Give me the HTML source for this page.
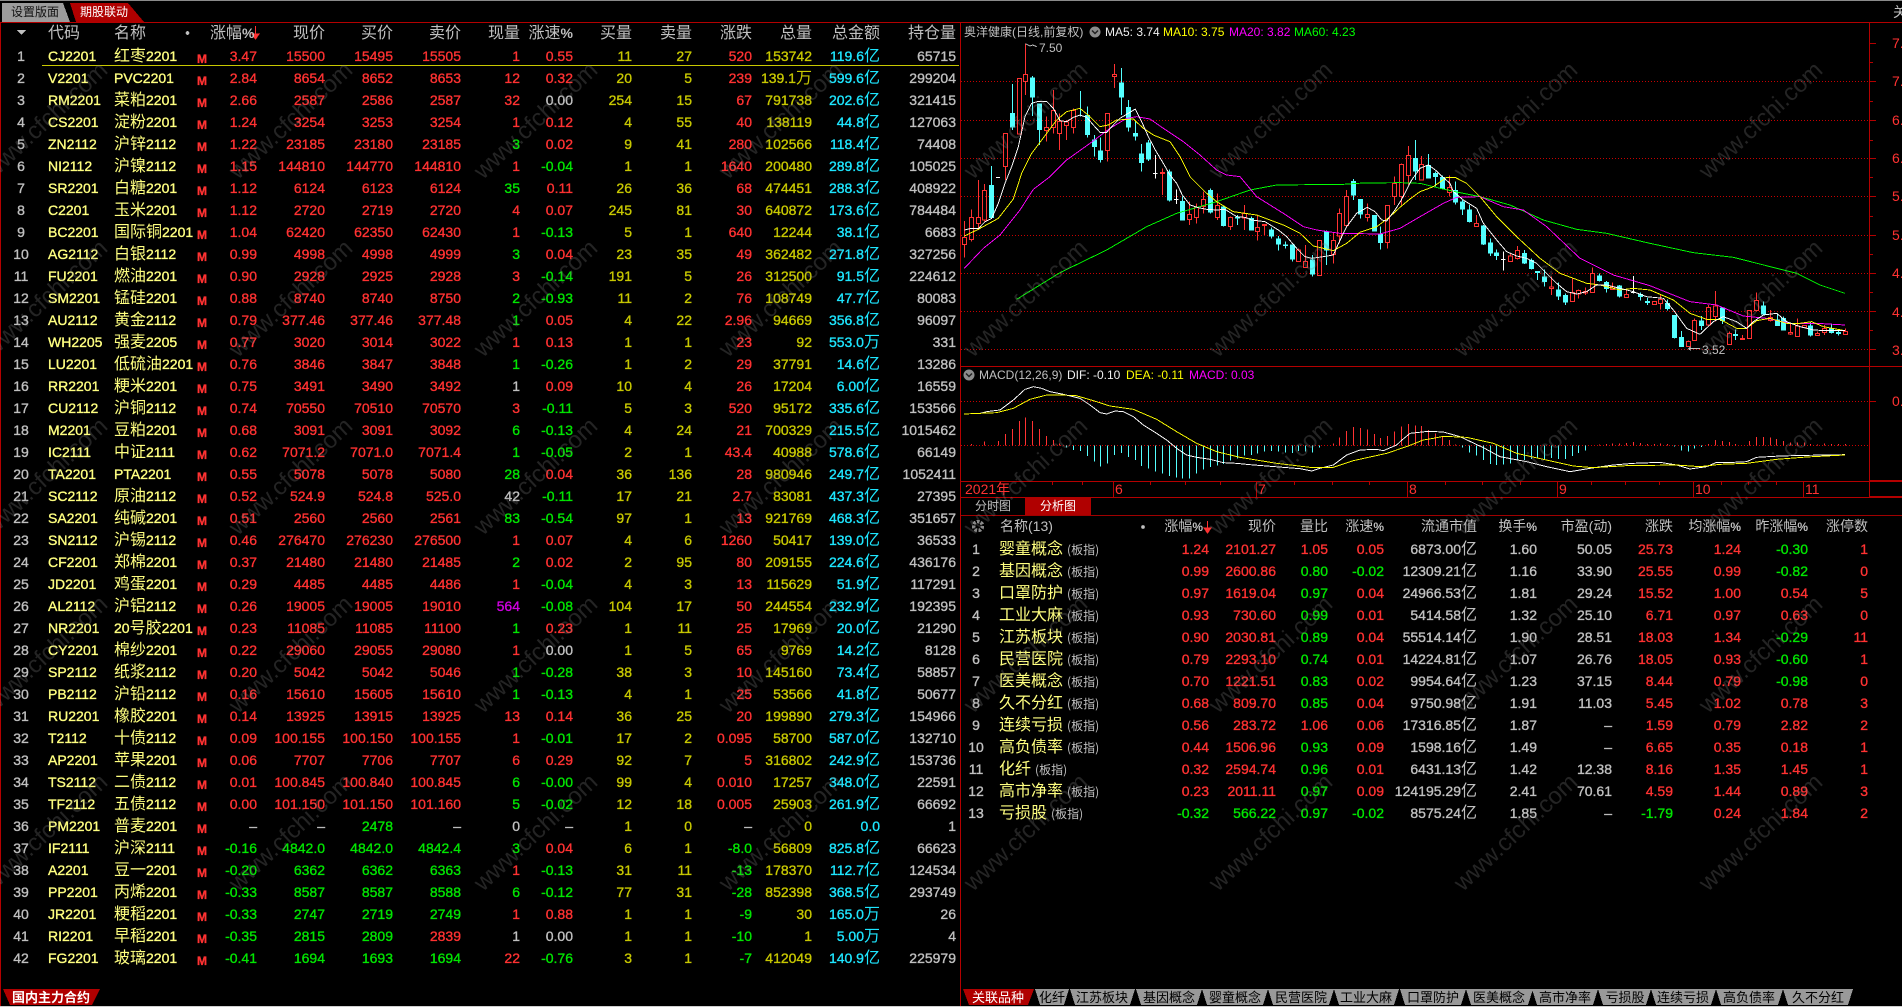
<!DOCTYPE html>
<html lang="zh"><head><meta charset="utf-8"><title>期股联动</title>
<style>
html,body{margin:0;padding:0;background:#000;width:1902px;height:1007px;overflow:hidden}
#p{position:relative;width:1902px;height:1007px;overflow:hidden;font-family:"Liberation Sans","WenQuanYi Zen Hei","Noto Sans CJK SC",sans-serif;font-size:14px;font-weight:normal;color:#c0c0c0}
svg{position:absolute;left:0;top:0;overflow:visible}
table{position:absolute;border-collapse:collapse;table-layout:fixed}
td,th{padding:0;white-space:nowrap;overflow:visible;line-height:22px;height:22px;text-align:right;font-weight:normal}
td{-webkit-text-stroke:.35px currentColor}
th{font-weight:normal;font-size:16px;color:#c0c0c0}
th b{font-size:14px;line-height:14px}
i{font-style:normal;font-weight:normal;font-size:16px;line-height:14px;font-family:"WenQuanYi Zen Hei","Noto Sans CJK SC",sans-serif;-webkit-text-stroke:0}
#L{left:0;top:23px;width:956px}
#R{left:961px;top:515px;width:907px}
#R th{font-size:14px;height:23px;line-height:23px}
#R th b{font-size:12px;line-height:12px}
#L td:nth-child(1),#R td:nth-child(1){text-align:center;color:#c0c0c0}
#L td:nth-child(2){text-align:left;padding-left:6px;color:#ffff80}
#L td:nth-child(3){text-align:left;color:#ffff80}
#L td:nth-child(4){text-align:left;padding-left:0;color:#ff3232;font-size:12px;font-weight:bold;position:relative;top:3px}
#L td{color:#ff3232}
#L td:nth-child(11),#L td:nth-child(12),#L td:nth-child(14){color:#c8c800}
#L td:nth-child(15){color:#1ee6ff}
#L td:nth-child(16){color:#c0c0c0}
#R td{color:#ff3232}
#R td:nth-child(2){text-align:left;padding-left:8px;color:#ffff80}
#R td:nth-child(2) u{text-decoration:none;font-size:12px;line-height:12px;font-weight:normal;color:#c0c0c0;margin-left:4px;-webkit-text-stroke:0;font-family:"WenQuanYi Zen Hei","Noto Sans CJK SC",sans-serif}
#R td:nth-child(7),#R td:nth-child(8),#R td:nth-child(9){color:#c0c0c0}
#L td.g,#R td.g{color:#00e600}
#L td.w,#R td.w{color:#c0c0c0}
#L td.m{color:#d000e0}
.t{position:absolute;white-space:nowrap;line-height:16px;font-weight:normal;font-size:12px}
</style></head><body><div id="p">

<svg width="1902" height="1007" shape-rendering="crispEdges">
<rect x="0" y="0" width="1902" height="1" fill="#8a8a8a"/>
<polygon points="2,3 63,3 70,22 2,22" fill="#9c9c9c"/>
<polygon points="70,3 128,3 144,22 76,22" fill="#b00000"/>
<rect x="0" y="22" width="1902" height="1" fill="#b40000"/>
<rect x="0" y="22" width="1" height="985" fill="#b40000"/>
<rect x="960" y="22" width="1" height="985" fill="#b40000"/>
<rect x="1869" y="22" width="1" height="475" fill="#b40000"/>
<rect x="961" y="366" width="941" height="1" fill="#b40000"/>
<rect x="961" y="481" width="908" height="1" fill="#b40000"/>
<rect x="1869" y="480" width="33" height="2" fill="#b40000"/>
<rect x="961" y="497" width="908" height="1" fill="#b40000"/>
<rect x="1869" y="496" width="33" height="2" fill="#b40000"/>
<rect x="961" y="515" width="941" height="1" fill="#a00000"/>
<rect x="1025" y="497" width="66" height="18" fill="#b00000"/>
<rect x="42" y="65" width="917" height="1" fill="#c8c800"/>
<rect x="0" y="1006" width="1902" height="1" fill="#cfcfcf"/>
<polygon points="17,30 26,30 21.5,35" fill="#c0c0c0"/>
<circle cx="187.500" cy="33" r="1.800" fill="#c0c0c0"/>
<circle cx="1143" cy="527" r="1.800" fill="#c0c0c0"/>
<path d="M255.500 26V37M252 34l3.500 5 3.500-5z" stroke="#ff3232" fill="#ff3232"/>
<path d="M1207.500 521V531M1204 528l3.500 5 3.500-5z" stroke="#ff3232" fill="#ff3232"/>
<circle cx="978" cy="526" r="4.500" fill="none" stroke="#8a8a8a" stroke-width="3.500" stroke-dasharray="2.500 1.500"/>
<g stroke="#c80000" stroke-width="1" stroke-dasharray="1 2" fill="none">
<path d="M961 81.500H1869M961 120.500H1869M961 158.500H1869M961 196.500H1869M961 235.500H1869M961 273.500H1869M961 311.500H1869M961 349.500H1869M961 401.500H1869M961 445.500H1869"/>
</g>
<g stroke="#b40000" stroke-width="1" fill="none">
<path d="M1869 43.500h7M1869 81.500h7M1869 120.500h7M1869 158.500h7M1869 196.500h7M1869 235.500h7M1869 273.500h7M1869 311.500h7M1869 349.500h7M1869 401.500h7M1869 62.500h4M1869 101.500h4M1869 140.500h4M1869 177.500h4M1869 216.500h4M1869 254.500h4M1869 292.500h4M1869 330.500h4"/>
<path d="M1113.500 481V497M1256.500 481V497M1407.500 481V497M1557.500 481V497M1693.500 481V497M1803.500 481V497M1052.500 481v4M1082.500 481v4M1150.500 481v4M1185.500 481v4M1220.500 481v4M1294.500 481v4M1332.500 481v4M1369.500 481v4M1445.500 481v4M1482.500 481v4M1520.500 481v4M1591.500 481v4M1625.500 481v4M1659.500 481v4M1721.500 481v4M1748.500 481v4M1776.500 481v4"/>
</g>

<g transform="translate(950 0) scale(.33333)" stroke-width="3" fill="none">
<path stroke="#ff3232" d="M43 663V712M43 734V773M37 712h13v22h-13zM64 628V652M64 719V725M58 652h13v67h-13zM85 540V652M85 670V690M79 652h13v18h-13zM103 552V571M103 660V665M97 571h13v89h-13zM166 499V540M160 400h13v99h-13zM202 235h13v167h-13zM226 130V223M226 244V285M220 223h13v21h-13zM289 350V383M289 392V425M283 383h13v9h-13zM310 270V331M310 383V400M304 331h13v52h-13zM328 340V365M328 401V450M322 365h13v36h-13zM349 360V366M349 377V420M343 366h13v11h-13zM370 325V331M370 383V400M364 331h13v52h-13zM472 452V485M466 340h13v112h-13zM493 192V223M493 230V264M487 223h13v7h-13zM637 505V517M637 520V585M631 517h13v3h-13zM718 605V644M718 658V675M712 644h13v14h-13zM739 610V623M739 652V670M733 623h13v29h-13zM760 575V598M760 620V640M754 598h13v22h-13zM802 580V617M802 652V660M796 617h13v35h-13zM841 650V652M841 680V690M835 652h13v28h-13zM883 615V640M883 654V690M877 640h13v14h-13zM922 645V682M922 694V722M916 682h13v12h-13zM943 672V705M937 673h13v3h-13zM1039 750h13v35h-13zM1045 745V750M1066 735V785M1060 785h13v17h-13zM1108 720V722M1102 722h13v104h-13zM1150 697V722M1150 763V790M1144 722h13v41h-13zM1168 625V640M1168 708V730M1162 640h13v68h-13zM1189 570V589M1189 677V680M1183 589h13v88h-13zM1252 610V643M1252 652V665M1246 643h13v9h-13zM1312 727V745M1306 616h13v111h-13zM1333 530V551M1333 589V615M1327 551h13v38h-13zM1354 490V493M1354 590V615M1348 493h13v97h-13zM1375 438V466M1375 526V555M1369 466h13v60h-13zM1414 468V493M1408 493h13v47h-13zM1498 527V562M1498 577V590M1492 562h13v15h-13zM1579 645V670M1573 670h13v10h-13zM1681 760V768M1675 768h13v16h-13zM1702 738V752M1702 775V778M1696 752h13v23h-13zM1804 830V861M1804 866V885M1798 861h13v5h-13zM1867 835V877M1861 877h13v28h-13zM1885 868V872M1885 882V895M1879 872h13v10h-13zM1906 863V875M1906 879V885M1900 875h13v4h-13zM1927 802V820M1921 820h13v57h-13zM1987 847V861M1981 861h13v7h-13zM2029 870V883M2023 883h13v9h-13zM2107 905h13v8h-13zM2131 885V899M2131 911V928M2125 899h13v12h-13zM2215 1022V1024M2209 1024h13v16h-13zM2233 955V961M2227 961h13v60h-13zM2275 915V922M2275 975V980M2269 922h13v53h-13zM2296 873V918M2296 950V965M2290 918h13v32h-13zM2338 995V1000M2332 1000h13v33h-13zM2377 1005V1015M2371 1015h13v3h-13zM2392 932h13v84h-13zM2419 877V902M2413 902h13v30h-13zM2461 930V952M2461 961V965M2455 952h13v9h-13zM2521 970V997M2521 1002V1005M2515 997h13v5h-13zM2542 955V978M2536 978h13v32h-13zM2563 975V977M2557 977h13v6h-13zM2602 995V1000M2596 1000h13v6h-13zM2623 975V985M2623 998V1005M2617 985h13v13h-13zM2686 985V995M2680 995h13v8h-13z"/>
<path stroke="#54ffff" fill="#54ffff" d="M124 498V655M118 556h12v96h-12zM187 252V390M181 340h12v41h-12zM247 228V348M241 234h12v57h-12zM268 310V435M262 312h12v77h-12zM391 273V350M412 320V413M406 347h12v57h-12zM433 405V470M427 420h12v20h-12zM451 412V488M445 453h12v25h-12zM514 204V345M508 249h12v42h-12zM535 300V395M529 322h12v59h-12zM556 365V422M550 400h12v8h-12zM574 432V515M568 462h12v26h-12zM595 420V483M589 429h12v48h-12zM658 508V605M652 516h12v84h-12zM697 590V662M691 604h12v56h-12zM781 565V640M775 571h12v65h-12zM820 618V680M814 621h12v55h-12zM862 645V675M856 652h12v2h-12zM904 650V692M898 655h12v35h-12zM964 682V715M958 690h12v18h-12zM985 708V752M979 717h12v15h-12zM1006 725V745M1000 735h12v2h-12zM1027 735V785M1021 735h12v42h-12zM1087 765V830M1081 780h12v42h-12zM1129 692V795M1123 696h12v54h-12zM1210 537V600M1204 545h12v40h-12zM1231 597V655M1225 598h12v44h-12zM1273 645V695M1267 646h12v47h-12zM1291 680V748M1285 703h12v25h-12zM1396 420V540M1390 475h12v38h-12zM1435 462V535M1429 497h12v37h-12zM1456 515V560M1450 520h12v10h-12zM1477 527V568M1471 532h12v33h-12zM1516 545V614M1510 572h12v34h-12zM1537 600V645M1531 606h12v21h-12zM1558 615V667M1552 630h12v34h-12zM1600 675V735M1594 678h12v54h-12zM1621 715V768M1615 729h12v30h-12zM1639 748V780M1633 759h12v8h-12zM1723 750V792M1717 760h12v29h-12zM1744 775V808M1738 782h12v24h-12zM1762 813V840M1756 815h12v2h-12zM1783 808V860M1777 831h12v13h-12zM1825 848V900M1819 870h12v18h-12zM1846 880V915M1840 887h12v19h-12zM1948 820V845M1942 828h12v13h-12zM1969 843V878M1963 847h12v19h-12zM2008 855V892M2002 858h12v30h-12zM2071 878V902M2065 884h12v6h-12zM2092 893V915M2086 905h12v2h-12zM2152 898V932M2146 910h12v16h-12zM2173 945V1016M2167 946h12v66h-12zM2194 993V1040M2188 1012h12v28h-12zM2254 948V990M2248 963h12v14h-12zM2317 922V972M2311 924h12v38h-12zM2356 988V1020M2350 1003h12v4h-12zM2440 905V945M2434 918h12v24h-12zM2482 940V978M2476 960h12v17h-12zM2500 950V990M2494 955h12v35h-12zM2581 965V1010M2575 978h12v27h-12zM2644 970V1000M2638 985h12v13h-12zM2665 990V1006M2659 997h12v4h-12z"/>
<path stroke="#ffffff" d="M138 532H150M616 465V535M609 521H623M679 568V612M672 598H686M1660 755V812M1653 778H1667M2050 828V880M2043 878H2057"/>
<g stroke-width="2.800">
<polyline stroke="#00ff00" points="200,898 330,818 470,750 590,680 680,640 800,605 900,570 980,555 1180,553 1240,549 1350,548 1410,550 1470,565 1530,578 1590,590 1680,615 1780,660 1880,688 1970,700 2100,730 2230,758 2350,772 2540,820 2610,855 2685,880"/>
<polyline stroke="#ff00ff" points="43,805 100,745 150,705 210,630 250,568 300,530 350,480 420,430 480,385 530,355 560,350 600,357 640,385 700,425 750,465 800,510 830,525 870,530 920,590 1000,640 1060,680 1100,690 1170,700 1290,702 1350,685 1410,650 1480,610 1520,592 1590,590 1660,620 1720,630 1790,680 1890,775 1990,825 2100,857 2220,905 2300,915 2380,948 2450,955 2520,970 2600,970 2685,975"/>
<polyline stroke="#ffff00" points="43,708 85,688 145,655 190,597 215,520 245,460 290,400 320,360 350,335 390,325 420,350 450,380 475,375 500,360 550,357 580,385 610,405 660,425 690,470 720,530 770,580 800,605 850,635 920,645 1000,675 1050,700 1090,738 1150,752 1190,730 1230,697 1280,680 1320,650 1350,622 1380,597 1410,575 1450,560 1490,532 1515,532 1550,550 1590,590 1640,650 1700,710 1770,775 1830,820 1910,850 1950,855 2010,870 2050,865 2100,870 2170,900 2220,940 2270,958 2310,958 2360,985 2390,985 2420,962 2460,955 2510,970 2550,970 2585,965 2620,980 2685,992"/>
<polyline stroke="#ffffff" points="43,690 60,686 85,686 105,665 125,655 145,610 165,550 185,500 205,440 225,350 245,310 265,304 290,304 310,325 330,362 350,365 370,352 390,345 410,352 430,375 450,397 470,397 490,375 510,355 535,340 556,327 575,365 595,410 616,450 640,490 660,525 680,550 697,585 720,615 745,623 770,628 800,630 825,628 860,650 885,652 905,660 945,665 985,690 1010,710 1040,745 1065,770 1085,775 1120,770 1150,765 1168,725 1190,680 1220,640 1252,622 1275,635 1295,660 1310,663 1335,630 1354,600 1385,540 1410,505 1435,495 1456,510 1477,530 1500,550 1510,575 1540,600 1580,625 1600,670 1640,720 1670,755 1700,768 1730,775 1760,790 1790,820 1820,850 1850,875 1880,882 1910,875 1940,855 1970,855 2010,865 2050,875 2090,890 2140,895 2170,930 2210,985 2250,1003 2290,965 2320,950 2360,965 2390,985 2410,965 2440,945 2480,940 2510,965 2550,980 2590,990 2630,992 2685,992"/>
</g>
<path stroke="#c0c0c0" d="M226 131l14 7 8-3 12 5M2215 1046H2250M2215 1046l8-5M2215 1046l8 5"/>
</g>

<g transform="translate(950 360) scale(.33333)" stroke-width="3" fill="none">
<path stroke="#ff3232" d="M65 256V252M103 256V245M145 256V243M166 256V222M187 256V207M208 256V183M226 256V172M247 256V183M268 256V207M289 256V228M310 256V240M328 256V250M1150 256V250M1168 256V232M1189 256V213M1210 256V201M1231 256V204M1252 256V209M1273 256V222M1291 256V234M1312 256V228M1333 256V215M1354 256V200M1375 256V192M1396 256V196M1414 256V198M1435 256V210M1456 256V220M1477 256V228M1498 256V240M1516 256V254M1948 256V254M1969 256V252M1987 256V250M2008 256V250M2029 256V249M2050 256V246M2071 256V249M2092 256V252M2113 256V252M2131 256V250M2152 256V252M2275 256V252M2296 256V240M2317 256V243M2338 256V246M2356 256V252M2398 256V243M2419 256V231M2440 256V231M2461 256V232M2479 256V237M2500 256V243M2521 256V247M2542 256V247M2563 256V247M2581 256V252M2602 256V254M2623 256V250M2644 256V252M2665 256V252M2686 256V252"/>
<path stroke="#54ffff" d="M349 256V263M370 256V270M391 256V273M412 256V288M433 256V305M451 256V320M472 256V310M493 256V285M514 256V279M535 256V291M556 256V300M574 256V318M595 256V326M616 256V335M637 256V340M658 256V348M679 256V352M697 256V356M718 256V355M739 256V340M760 256V328M781 256V321M802 256V316M820 256V312M841 256V302M862 256V295M883 256V287M904 256V285M922 256V280M943 256V275M964 256V273M985 256V275M1006 256V277M1027 256V279M1045 256V273M1066 256V275M1087 256V278M1108 256V263M1537 256V263M1558 256V278M1579 256V286M1600 256V300M1621 256V312M1639 256V315M1660 256V313M1681 256V310M1702 256V302M1723 256V300M1744 256V297M1762 256V296M1783 256V297M1804 256V294M1825 256V297M1846 256V297M1867 256V288M1885 256V279M1906 256V272M2173 256V259M2194 256V272M2215 256V275M2233 256V266M2254 256V261"/>
<g stroke-width="2.800">
<polyline stroke="#ffffff" points="42,162 90,160 110,155 150,150 190,120 225,88 250,80 275,85 300,95 340,103 390,115 420,135 450,158 470,162 495,153 520,155 550,170 580,195 620,220 650,240 680,265 710,285 740,292 780,298 820,308 860,310 900,314 950,318 1000,322 1050,326 1085,333 1110,325 1150,315 1190,285 1230,270 1280,268 1300,272 1340,255 1350,245 1380,220 1435,214 1480,216 1530,230 1600,263 1650,290 1730,305 1790,320 1860,335 1920,325 1990,315 2050,310 2130,307 2180,315 2220,327 2270,320 2300,307 2350,307 2390,305 2420,292 2490,288 2570,286 2685,284"/>
<polyline stroke="#ffff00" points="42,162 90,160 140,158 190,145 240,118 290,105 375,106 430,122 480,138 550,148 620,178 680,215 740,250 800,275 870,292 980,310 1080,322 1150,322 1210,302 1310,280 1375,258 1420,240 1450,235 1480,229 1550,232 1630,250 1700,280 1780,298 1870,318 1930,323 2030,317 2180,315 2250,320 2310,313 2390,310 2480,298 2570,291 2685,285"/>
</g>
</g>

<g font-family="&quot;WenQuanYi Zen Hei&quot;,&quot;Noto Sans CJK SC&quot;,sans-serif" font-size="13" font-weight="normal" text-anchor="middle">
<polygon points="3,989 100,989 92,1005 10,1005" fill="#b00000"/>
<polygon points="963,989 1034,989 1028,1005 969,1005" fill="#b00000"/>
<polygon points="1035,989 1069,989 1064,1005 1040,1005" fill="#999"/>
<polygon points="1070,989 1135,989 1130,1005 1075,1005" fill="#999"/>
<polygon points="1136,989 1202,989 1197,1005 1141,1005" fill="#999"/>
<polygon points="1202,989 1268,989 1263,1005 1207,1005" fill="#999"/>
<polygon points="1268,989 1334,989 1329,1005 1273,1005" fill="#999"/>
<polygon points="1334,989 1399,989 1394,1005 1339,1005" fill="#999"/>
<polygon points="1400,989 1466,989 1461,1005 1405,1005" fill="#999"/>
<polygon points="1466,989 1533,989 1528,1005 1471,1005" fill="#999"/>
<polygon points="1532,989 1598,989 1593,1005 1537,1005" fill="#999"/>
<polygon points="1598,989 1651,989 1646,1005 1603,1005" fill="#999"/>
<polygon points="1651,989 1716,989 1711,1005 1656,1005" fill="#999"/>
<polygon points="1716,989 1783,989 1778,1005 1721,1005" fill="#999"/>
<polygon points="1783,989 1853,989 1848,1005 1788,1005" fill="#999"/>
<g shape-rendering="auto">
<text x="51" y="1002" fill="#fff" font-weight="bold">国内主力合约</text>
<text x="998" y="1002" fill="#fff">关联品种</text>
<text x="1052" y="1002" fill="#000">化纤</text>
<text x="1102" y="1002" fill="#000">江苏板块</text>
<text x="1169" y="1002" fill="#000">基因概念</text>
<text x="1235" y="1002" fill="#000">婴童概念</text>
<text x="1301" y="1002" fill="#000">民营医院</text>
<text x="1366" y="1002" fill="#000">工业大麻</text>
<text x="1433" y="1002" fill="#000">口罩防护</text>
<text x="1499" y="1002" fill="#000">医美概念</text>
<text x="1565" y="1002" fill="#000">高市净率</text>
<text x="1625" y="1002" fill="#000">亏损股</text>
<text x="1683" y="1002" fill="#000">连续亏损</text>
<text x="1749" y="1002" fill="#000">高负债率</text>
<text x="1818" y="1002" fill="#000">久不分红</text>
</g>
</g>
<g shape-rendering="auto">
<circle cx="1095" cy="32" r="5.500" fill="#8c8c8c"/><path d="M1092 30.500l3 3 3-3" stroke="#222" stroke-width="1.500" fill="none"/>
<circle cx="969" cy="375" r="5.500" fill="#8c8c8c"/><path d="M966 373.500l3 3 3-3" stroke="#222" stroke-width="1.500" fill="none"/>
</g>
</svg>

<div class="t" style="left:11px;top:4px;color:#111;font-size:12px;letter-spacing:0">设置版面</div>
<div class="t" style="left:80px;top:4px;color:#fff;font-size:12px">期股联动</div>
<div class="t" style="left:1893px;top:4px;color:#c0c0c0;font-size:14px">关联</div>

<div class="t" style="left:964px;top:24px;color:#c0c0c0">奥洋健康(日线,前复权)</div>
<div class="t" style="left:1105px;top:24px;color:#f0f0f0">MA5: 3.74</div>
<div class="t" style="left:1163px;top:24px;color:#ffff00">MA10: 3.75</div>
<div class="t" style="left:1229px;top:24px;color:#ff00ff">MA20: 3.82</div>
<div class="t" style="left:1294px;top:24px;color:#00ff00">MA60: 4.23</div>
<div class="t" style="left:1039px;top:40px;color:#c0c0c0">7.50</div>
<div class="t" style="left:1702px;top:342px;color:#c0c0c0">3.52</div>
<div class="t" style="left:979px;top:367px;color:#c0c0c0">MACD(12,26,9)</div>
<div class="t" style="left:1067px;top:367px;color:#f0f0f0">DIF: -0.10</div>
<div class="t" style="left:1126px;top:367px;color:#ffff00">DEA: -0.11</div>
<div class="t" style="left:1189px;top:367px;color:#ff00ff">MACD: 0.03</div>

<div class="t" style="left:1892px;top:35px;color:#ff3232;font-size:14px">7.50</div>
<div class="t" style="left:1892px;top:73px;color:#ff3232;font-size:14px">7.00</div>
<div class="t" style="left:1892px;top:112px;color:#ff3232;font-size:14px">6.50</div>
<div class="t" style="left:1892px;top:150px;color:#ff3232;font-size:14px">6.00</div>
<div class="t" style="left:1892px;top:188px;color:#ff3232;font-size:14px">5.50</div>
<div class="t" style="left:1892px;top:227px;color:#ff3232;font-size:14px">5.00</div>
<div class="t" style="left:1892px;top:265px;color:#ff3232;font-size:14px">4.50</div>
<div class="t" style="left:1892px;top:304px;color:#ff3232;font-size:14px">4.00</div>
<div class="t" style="left:1892px;top:342px;color:#ff3232;font-size:14px">3.50</div>
<div class="t" style="left:1892px;top:393px;color:#ff3232;font-size:14px">0.15</div>

<div class="t" style="left:965px;top:481px;color:#ff3232;font-size:14px">2021年</div>
<div class="t" style="left:1115px;top:481px;color:#ff3232;font-size:14px">6</div>
<div class="t" style="left:1258px;top:481px;color:#ff3232;font-size:14px">7</div>
<div class="t" style="left:1409px;top:481px;color:#ff3232;font-size:14px">8</div>
<div class="t" style="left:1559px;top:481px;color:#ff3232;font-size:14px">9</div>
<div class="t" style="left:1695px;top:481px;color:#ff3232;font-size:14px">10</div>
<div class="t" style="left:1805px;top:481px;color:#ff3232;font-size:14px">11</div>
<div class="t" style="left:975px;top:498px;color:#c0c0c0;font-size:12px">分时图</div>
<div class="t" style="left:1040px;top:498px;color:#fff;font-size:12px">分析图</div>

<table id="L">
<colgroup><col style="width:42px"><col style="width:72px"><col style="width:83px"><col style="width:13px"><col style="width:47px"><col style="width:68px"><col style="width:68px"><col style="width:68px"><col style="width:59px"><col style="width:53px"><col style="width:59px"><col style="width:60px"><col style="width:60px"><col style="width:60px"><col style="width:68px"><col style="width:76px"></colgroup>
<tr style="height:21px"><th></th><th style="text-align:left;padding-left:6px">代码</th><th style="text-align:left">名称</th><th></th><th style="padding-right:5px">涨幅<b>%</b></th><th>现价</th><th>买价</th><th>卖价</th><th>现量</th><th>涨速<b>%</b></th><th>买量</th><th>卖量</th><th>涨跌</th><th>总量</th><th>总金额</th><th>持仓量</th></tr>
<tr><td>1<td>CJ2201<td><i>红枣</i>2201<td>M<td>3.47<td>15500<td>15495<td>15505<td>1<td>0.55<td>11<td>27<td>520<td>153742<td>119.6<i>亿</i><td>65715</tr>
<tr><td>2<td>V2201<td>PVC2201<td>M<td>2.84<td>8654<td>8652<td>8653<td>12<td>0.32<td>20<td>5<td>239<td>139.1<i>万</i><td>599.6<i>亿</i><td>299204</tr>
<tr><td>3<td>RM2201<td><i>菜粕</i>2201<td>M<td>2.66<td>2587<td>2586<td>2587<td>32<td class=w>0.00<td>254<td>15<td>67<td>791738<td>202.6<i>亿</i><td>321415</tr>
<tr><td>4<td>CS2201<td><i>淀粉</i>2201<td>M<td>1.24<td>3254<td>3253<td>3254<td>1<td>0.12<td>4<td>55<td>40<td>138119<td>44.8<i>亿</i><td>127063</tr>
<tr><td>5<td>ZN2112<td><i>沪锌</i>2112<td>M<td>1.22<td>23185<td>23180<td>23185<td class=g>3<td>0.02<td>9<td>41<td>280<td>102566<td>118.4<i>亿</i><td>74408</tr>
<tr><td>6<td>NI2112<td><i>沪镍</i>2112<td>M<td>1.15<td>144810<td>144770<td>144810<td>1<td class=g>-0.04<td>1<td>1<td>1640<td>200480<td>289.8<i>亿</i><td>105025</tr>
<tr><td>7<td>SR2201<td><i>白糖</i>2201<td>M<td>1.12<td>6124<td>6123<td>6124<td class=g>35<td>0.11<td>26<td>36<td>68<td>474451<td>288.3<i>亿</i><td>408922</tr>
<tr><td>8<td>C2201<td><i>玉米</i>2201<td>M<td>1.12<td>2720<td>2719<td>2720<td>4<td>0.07<td>245<td>81<td>30<td>640872<td>173.6<i>亿</i><td>784484</tr>
<tr><td>9<td>BC2201<td><i>国际铜</i>2201<td>M<td>1.04<td>62420<td>62350<td>62430<td>1<td class=g>-0.13<td>5<td>1<td>640<td>12244<td>38.1<i>亿</i><td>6683</tr>
<tr><td>10<td>AG2112<td><i>白银</i>2112<td>M<td>0.99<td>4998<td>4998<td>4999<td class=g>3<td>0.04<td>23<td>35<td>49<td>362482<td>271.8<i>亿</i><td>327256</tr>
<tr><td>11<td>FU2201<td><i>燃油</i>2201<td>M<td>0.90<td>2928<td>2925<td>2928<td>3<td class=g>-0.14<td>191<td>5<td>26<td>312500<td>91.5<i>亿</i><td>224612</tr>
<tr><td>12<td>SM2201<td><i>锰硅</i>2201<td>M<td>0.88<td>8740<td>8740<td>8750<td class=g>2<td class=g>-0.93<td>11<td>2<td>76<td>108749<td>47.7<i>亿</i><td>80083</tr>
<tr><td>13<td>AU2112<td><i>黄金</i>2112<td>M<td>0.79<td>377.46<td>377.46<td>377.48<td class=g>1<td>0.05<td>4<td>22<td>2.96<td>94669<td>356.8<i>亿</i><td>96097</tr>
<tr><td>14<td>WH2205<td><i>强麦</i>2205<td>M<td>0.77<td>3020<td>3014<td>3022<td>1<td>0.13<td>1<td>1<td>23<td>92<td>553.0<i>万</i><td>331</tr>
<tr><td>15<td>LU2201<td><i>低硫油</i>2201<td>M<td>0.76<td>3846<td>3847<td>3848<td class=g>1<td class=g>-0.26<td>1<td>2<td>29<td>37791<td>14.6<i>亿</i><td>13286</tr>
<tr><td>16<td>RR2201<td><i>粳米</i>2201<td>M<td>0.75<td>3491<td>3490<td>3492<td class=w>1<td>0.09<td>10<td>4<td>26<td>17204<td>6.00<i>亿</i><td>16559</tr>
<tr><td>17<td>CU2112<td><i>沪铜</i>2112<td>M<td>0.74<td>70550<td>70510<td>70570<td>3<td class=g>-0.11<td>5<td>3<td>520<td>95172<td>335.6<i>亿</i><td>153566</tr>
<tr><td>18<td>M2201<td><i>豆粕</i>2201<td>M<td>0.68<td>3091<td>3091<td>3092<td class=g>6<td class=g>-0.13<td>4<td>24<td>21<td>700329<td>215.5<i>亿</i><td>1015462</tr>
<tr><td>19<td>IC2111<td><i>中证</i>2111<td>M<td>0.62<td>7071.2<td>7071.0<td>7071.4<td class=g>1<td class=g>-0.05<td>2<td>1<td>43.4<td>40988<td>578.6<i>亿</i><td>66149</tr>
<tr><td>20<td>TA2201<td>PTA2201<td>M<td>0.55<td>5078<td>5078<td>5080<td class=g>28<td>0.04<td>36<td>136<td>28<td>980946<td>249.7<i>亿</i><td>1052411</tr>
<tr><td>21<td>SC2112<td><i>原油</i>2112<td>M<td>0.52<td>524.9<td>524.8<td>525.0<td class=w>42<td class=g>-0.11<td>17<td>21<td>2.7<td>83081<td>437.3<i>亿</i><td>27395</tr>
<tr><td>22<td>SA2201<td><i>纯碱</i>2201<td>M<td>0.51<td>2560<td>2560<td>2561<td class=g>83<td class=g>-0.54<td>97<td>1<td>13<td>921769<td>468.3<i>亿</i><td>351657</tr>
<tr><td>23<td>SN2112<td><i>沪锡</i>2112<td>M<td>0.46<td>276470<td>276230<td>276500<td>1<td>0.07<td>4<td>6<td>1260<td>50417<td>139.0<i>亿</i><td>36533</tr>
<tr><td>24<td>CF2201<td><i>郑棉</i>2201<td>M<td>0.37<td>21480<td>21480<td>21485<td class=g>2<td>0.02<td>2<td>95<td>80<td>209155<td>224.6<i>亿</i><td>436176</tr>
<tr><td>25<td>JD2201<td><i>鸡蛋</i>2201<td>M<td>0.29<td>4485<td>4485<td>4486<td>1<td class=g>-0.04<td>4<td>3<td>13<td>115629<td>51.9<i>亿</i><td>117291</tr>
<tr><td>26<td>AL2112<td><i>沪铝</i>2112<td>M<td>0.26<td>19005<td>19005<td>19010<td class=m>564<td class=g>-0.08<td>104<td>17<td>50<td>244554<td>232.9<i>亿</i><td>192395</tr>
<tr><td>27<td>NR2201<td>20<i>号胶</i>2201<td>M<td>0.23<td>11085<td>11085<td>11100<td class=g>1<td>0.23<td>1<td>11<td>25<td>17969<td>20.0<i>亿</i><td>21290</tr>
<tr><td>28<td>CY2201<td><i>棉纱</i>2201<td>M<td>0.22<td>29060<td>29055<td>29080<td>1<td class=w>0.00<td>1<td>5<td>65<td>9769<td>14.2<i>亿</i><td>8128</tr>
<tr><td>29<td>SP2112<td><i>纸浆</i>2112<td>M<td>0.20<td>5042<td>5042<td>5046<td class=g>1<td class=g>-0.28<td>38<td>3<td>10<td>145160<td>73.4<i>亿</i><td>58857</tr>
<tr><td>30<td>PB2112<td><i>沪铅</i>2112<td>M<td>0.16<td>15610<td>15605<td>15610<td class=g>1<td class=g>-0.13<td>4<td>1<td>25<td>53566<td>41.8<i>亿</i><td>50677</tr>
<tr><td>31<td>RU2201<td><i>橡胶</i>2201<td>M<td>0.14<td>13925<td>13915<td>13925<td>13<td>0.14<td>36<td>25<td>20<td>199890<td>279.3<i>亿</i><td>154966</tr>
<tr><td>32<td>T2112<td><i>十债</i>2112<td>M<td>0.09<td>100.155<td>100.150<td>100.155<td>1<td class=g>-0.01<td>17<td>2<td>0.095<td>58700<td>587.0<i>亿</i><td>132710</tr>
<tr><td>33<td>AP2201<td><i>苹果</i>2201<td>M<td>0.06<td>7707<td>7706<td>7707<td>6<td>0.29<td>92<td>7<td>5<td>316802<td>242.9<i>亿</i><td>153736</tr>
<tr><td>34<td>TS2112<td><i>二债</i>2112<td>M<td>0.01<td>100.845<td>100.840<td>100.845<td class=g>6<td class=g>-0.00<td>99<td>4<td>0.010<td>17257<td>348.0<i>亿</i><td>22591</tr>
<tr><td>35<td>TF2112<td><i>五债</i>2112<td>M<td>0.00<td>101.150<td>101.150<td>101.160<td class=g>5<td class=g>-0.02<td>12<td>18<td>0.005<td>25903<td>261.9<i>亿</i><td>66692</tr>
<tr><td>36<td>PM2201<td><i>普麦</i>2201<td>M<td class=w>–<td class=w>–<td class=g>2478<td class=w>–<td class=w>0<td class=w>–<td>1<td>0<td class=w>–<td>0<td>0.0<td>1</tr>
<tr><td>37<td>IF2111<td><i>沪深</i>2111<td>M<td class=g>-0.16<td class=g>4842.0<td class=g>4842.0<td class=g>4842.4<td class=g>3<td>0.04<td>6<td>1<td class=g>-8.0<td>56809<td>825.8<i>亿</i><td>66623</tr>
<tr><td>38<td>A2201<td><i>豆一</i>2201<td>M<td class=g>-0.20<td class=g>6362<td class=g>6362<td class=g>6363<td>1<td class=g>-0.13<td>31<td>11<td class=g>-13<td>178370<td>112.7<i>亿</i><td>124534</tr>
<tr><td>39<td>PP2201<td><i>丙烯</i>2201<td>M<td class=g>-0.33<td class=g>8587<td class=g>8587<td class=g>8588<td class=g>6<td class=g>-0.12<td>77<td>31<td class=g>-28<td>852398<td>368.5<i>亿</i><td>293749</tr>
<tr><td>40<td>JR2201<td><i>粳稻</i>2201<td>M<td class=g>-0.33<td class=g>2747<td class=g>2719<td class=g>2749<td>1<td>0.88<td>1<td>1<td class=g>-9<td>30<td>165.0<i>万</i><td>26</tr>
<tr><td>41<td>RI2201<td><i>早稻</i>2201<td>M<td class=g>-0.35<td class=g>2815<td class=g>2809<td>2839<td class=w>1<td class=w>0.00<td>1<td>1<td class=g>-10<td>1<td>5.00<i>万</i><td>4</tr>
<tr><td>42<td>FG2201<td><i>玻璃</i>2201<td>M<td class=g>-0.41<td class=g>1694<td class=g>1693<td class=g>1694<td>22<td class=g>-0.76<td>3<td>1<td class=g>-7<td>412049<td>140.9<i>亿</i><td>225979</tr>
</table>

<table id="R">
<colgroup><col style="width:30px"><col style="width:159px"><col style="width:59px"><col style="width:67px"><col style="width:52px"><col style="width:56px"><col style="width:93px"><col style="width:60px"><col style="width:75px"><col style="width:61px"><col style="width:68px"><col style="width:67px"><col style="width:60px"></colgroup>
<tr><th></th><th style="text-align:left;padding-left:9px">名称(13)</th><th style="padding-right:6px">涨幅<b>%</b></th><th>现价</th><th>量比</th><th>涨速<b>%</b></th><th>流通市值</th><th>换手<b>%</b></th><th>市盈(动)</th><th>涨跌</th><th>均涨幅<b>%</b></th><th>昨涨幅<b>%</b></th><th>涨停数</th></tr>
<tr><td>1<td><i>婴童概念</i><u>(板指)</u><td>1.24<td>2101.27<td>1.05<td>0.05<td class=w>6873.00<i>亿</i><td>1.60<td>50.05<td>25.73<td>1.24<td class=g>-0.30<td>1</tr>
<tr><td>2<td><i>基因概念</i><u>(板指)</u><td>0.99<td>2600.86<td class=g>0.80<td class=g>-0.02<td class=w>12309.21<i>亿</i><td>1.16<td>33.90<td>25.55<td>0.99<td class=g>-0.82<td>0</tr>
<tr><td>3<td><i>口罩防护</i><u>(板指)</u><td>0.97<td>1619.04<td class=g>0.97<td>0.04<td class=w>24966.53<i>亿</i><td>1.81<td>29.24<td>15.52<td>1.00<td>0.54<td>5</tr>
<tr><td>4<td><i>工业大麻</i><u>(板指)</u><td>0.93<td>730.60<td class=g>0.99<td>0.01<td class=w>5414.58<i>亿</i><td>1.32<td>25.10<td>6.71<td>0.97<td>0.63<td>0</tr>
<tr><td>5<td><i>江苏板块</i><u>(板指)</u><td>0.90<td>2030.81<td class=g>0.89<td>0.04<td class=w>55514.14<i>亿</i><td>1.90<td>28.51<td>18.03<td>1.34<td class=g>-0.29<td>11</tr>
<tr><td>6<td><i>民营医院</i><u>(板指)</u><td>0.79<td>2293.10<td class=g>0.74<td>0.01<td class=w>14224.81<i>亿</i><td>1.07<td>26.76<td>18.05<td>0.93<td class=g>-0.60<td>1</tr>
<tr><td>7<td><i>医美概念</i><u>(板指)</u><td>0.70<td>1221.51<td class=g>0.83<td>0.02<td class=w>9954.64<i>亿</i><td>1.23<td>37.15<td>8.44<td>0.79<td class=g>-0.98<td>0</tr>
<tr><td>8<td><i>久不分红</i><u>(板指)</u><td>0.68<td>809.70<td class=g>0.85<td>0.04<td class=w>9750.98<i>亿</i><td>1.91<td>11.03<td>5.45<td>1.02<td>0.78<td>3</tr>
<tr><td>9<td><i>连续亏损</i><u>(板指)</u><td>0.56<td>283.72<td>1.06<td>0.06<td class=w>17316.85<i>亿</i><td>1.87<td>–<td>1.59<td>0.79<td>2.82<td>2</tr>
<tr><td>10<td><i>高负债率</i><u>(板指)</u><td>0.44<td>1506.96<td class=g>0.93<td>0.09<td class=w>1598.16<i>亿</i><td>1.49<td>–<td>6.65<td>0.35<td>0.18<td>1</tr>
<tr><td>11<td><i>化纤</i><u>(板指)</u><td>0.32<td>2594.74<td class=g>0.96<td>0.01<td class=w>6431.13<i>亿</i><td>1.42<td>12.38<td>8.16<td>1.35<td>1.45<td>1</tr>
<tr><td>12<td><i>高市净率</i><u>(板指)</u><td>0.23<td>2011.11<td class=g>0.97<td>0.09<td class=w>124195.29<i>亿</i><td>2.41<td>70.61<td>4.59<td>1.44<td>0.89<td>3</tr>
<tr><td>13<td><i>亏损股</i><u>(板指)</u><td class=g>-0.32<td class=g>566.22<td class=g>0.97<td class=g>-0.02<td class=w>8575.24<i>亿</i><td>1.85<td>–<td class=g>-1.79<td>0.24<td>1.84<td>2</tr>
</table>

<svg width="1902" height="1007" style="pointer-events:none" font-family="&quot;Liberation Sans&quot;,sans-serif" font-size="24" font-weight="normal" fill="rgba(128,128,128,.28)" text-anchor="middle">
<g id="wm">
<text transform="translate(51 126) rotate(-43)">www.cfchi.com</text><text transform="translate(296 126) rotate(-43)">www.cfchi.com</text><text transform="translate(541 126) rotate(-43)">www.cfchi.com</text><text transform="translate(786 126) rotate(-43)">www.cfchi.com</text><text transform="translate(1031 126) rotate(-43)">www.cfchi.com</text><text transform="translate(1276 126) rotate(-43)">www.cfchi.com</text><text transform="translate(1521 126) rotate(-43)">www.cfchi.com</text><text transform="translate(1766 126) rotate(-43)">www.cfchi.com</text>
<text transform="translate(51 304) rotate(-43)">www.cfchi.com</text><text transform="translate(296 304) rotate(-43)">www.cfchi.com</text><text transform="translate(541 304) rotate(-43)">www.cfchi.com</text><text transform="translate(786 304) rotate(-43)">www.cfchi.com</text><text transform="translate(1031 304) rotate(-43)">www.cfchi.com</text><text transform="translate(1276 304) rotate(-43)">www.cfchi.com</text><text transform="translate(1521 304) rotate(-43)">www.cfchi.com</text><text transform="translate(1766 304) rotate(-43)">www.cfchi.com</text>
<text transform="translate(51 482) rotate(-43)">www.cfchi.com</text><text transform="translate(296 482) rotate(-43)">www.cfchi.com</text><text transform="translate(541 482) rotate(-43)">www.cfchi.com</text><text transform="translate(786 482) rotate(-43)">www.cfchi.com</text><text transform="translate(1031 482) rotate(-43)">www.cfchi.com</text><text transform="translate(1276 482) rotate(-43)">www.cfchi.com</text><text transform="translate(1521 482) rotate(-43)">www.cfchi.com</text><text transform="translate(1766 482) rotate(-43)">www.cfchi.com</text>
<text transform="translate(51 660) rotate(-43)">www.cfchi.com</text><text transform="translate(296 660) rotate(-43)">www.cfchi.com</text><text transform="translate(541 660) rotate(-43)">www.cfchi.com</text><text transform="translate(786 660) rotate(-43)">www.cfchi.com</text><text transform="translate(1031 660) rotate(-43)">www.cfchi.com</text><text transform="translate(1276 660) rotate(-43)">www.cfchi.com</text><text transform="translate(1521 660) rotate(-43)">www.cfchi.com</text><text transform="translate(1766 660) rotate(-43)">www.cfchi.com</text>
<text transform="translate(51 838) rotate(-43)">www.cfchi.com</text><text transform="translate(296 838) rotate(-43)">www.cfchi.com</text><text transform="translate(541 838) rotate(-43)">www.cfchi.com</text><text transform="translate(786 838) rotate(-43)">www.cfchi.com</text><text transform="translate(1031 838) rotate(-43)">www.cfchi.com</text><text transform="translate(1276 838) rotate(-43)">www.cfchi.com</text><text transform="translate(1521 838) rotate(-43)">www.cfchi.com</text><text transform="translate(1766 838) rotate(-43)">www.cfchi.com</text>
</g>
</svg>
</div></body></html>
